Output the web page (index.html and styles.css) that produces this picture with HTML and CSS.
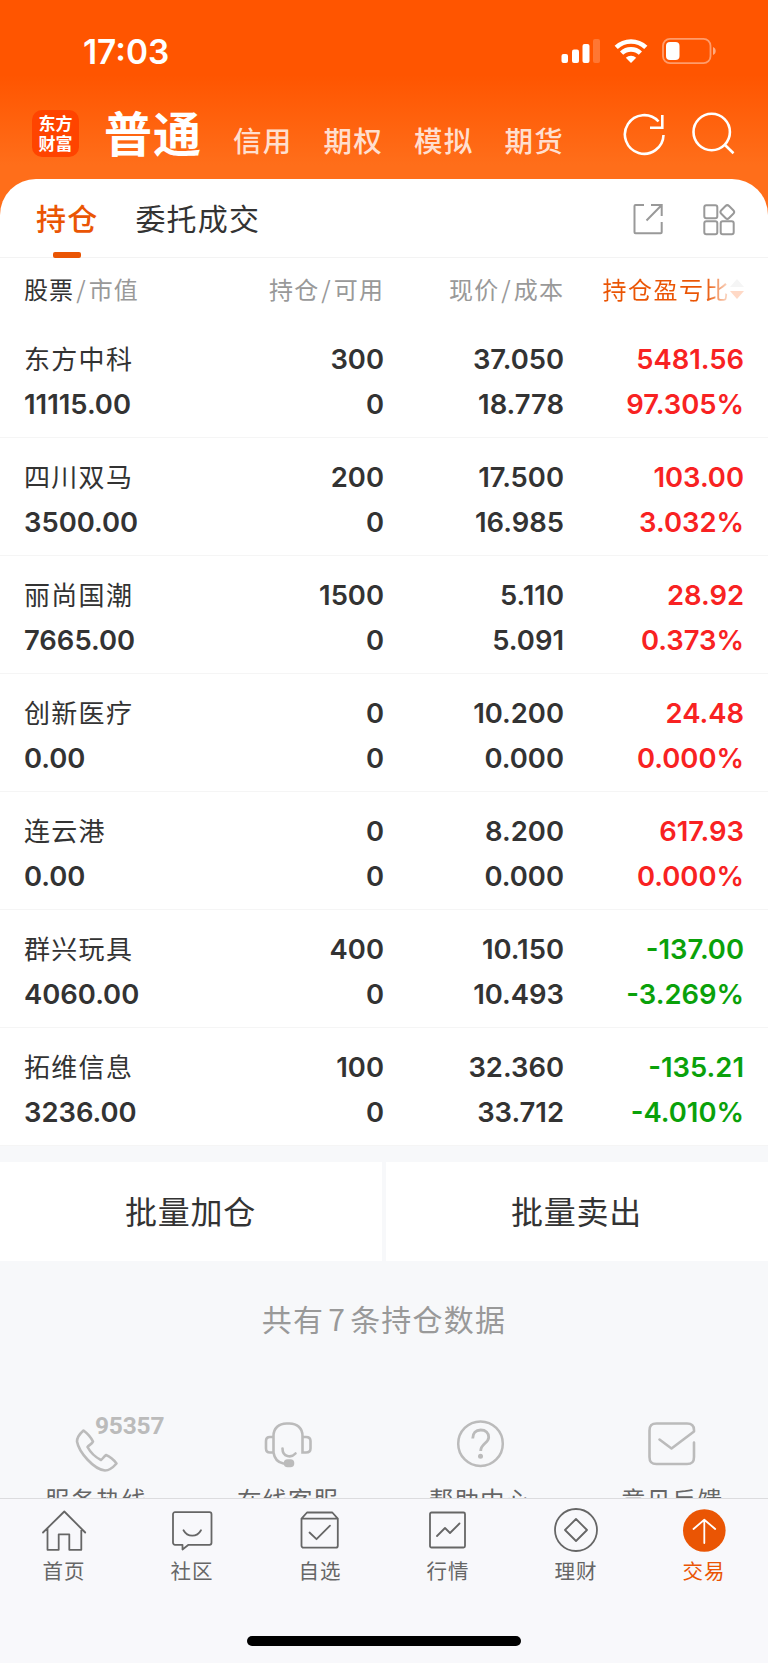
FILE: index.html
```html
<!DOCTYPE html>
<html lang="zh-CN">
<head>
  <meta charset="UTF-8">
  <meta name="viewport" content="width=device-width, initial-scale=1.0">
  <title>持仓</title>
  <link rel="stylesheet" href="styles.css">
</head>
<body>
  <div class="page">
    <header class="header">
      <div class="status">
        <span class="time">17:03</span>
        <svg class="status-icons" width="160" height="30" viewBox="0 0 160 30" fill="#fff">
          <!-- 信号 -->
          <rect x="1.5" y="18" width="6.5" height="9" rx="2"/>
          <rect x="12" y="13.500" width="7" height="13.500" rx="2"/>
          <rect x="22.500" y="8" width="7" height="19" rx="2"/>
          <rect x="33" y="3" width="7" height="24" rx="2" opacity=".2"/>
          <!-- wifi -->
          <g fill="none" stroke="#fff" stroke-width="4.600">
            <path d="M56.200 11.400a21.500 21.500 0 0 1 29.600 0"/>
            <path d="M61.600 17.200a13.500 13.500 0 0 1 18.800 0"/>
          </g>
          <path d="M71 27l-5.200-5.200a7.600 7.600 0 0 1 10.400 0z"/>
          <!-- 电池 -->
          <rect x="103" y="2.800" width="47.500" height="24.400" rx="7" fill="none" stroke="#fff" stroke-width="1.800" opacity=".42"/>
          <rect x="106" y="6" width="13.500" height="18" rx="4"/>
          <path d="M153 11c3.600 1.200 3.600 6.800 0 8z" opacity=".5"/>
        </svg>
      </div>
      <nav class="nav">
        <div class="logo">东方<br>财富</div>
        <span class="nav-on">普通</span>
        <span class="nav-item">信用</span>
        <span class="nav-item">期权</span>
        <span class="nav-item">模拟</span>
        <span class="nav-item">期货</span>
        <svg class="nav-icons" width="116" height="46" viewBox="0 0 116 46" fill="none" stroke="#fff" stroke-width="2.600">
          <path d="M43.500 24A19.300 19.300 0 1 1 38.500 10.500"/>
          <path d="M42.300 4v12.700H30" />
          <circle cx="91.700" cy="21" r="18.200"/>
          <path d="M104.500 33.500l9 8.700"/>
        </svg>
      </nav>
    </header>

    <main class="card">
      <div class="tabs">
        <span class="tab tab-on">持仓</span>
        <span class="tab">委托成交</span>
        <svg class="tab-icons" width="106" height="34" viewBox="0 0 106 34" fill="none" stroke="#999" stroke-width="2">
          <path d="M14 3H5.500a1 1 0 0 0-1 1v26.200a1 1 0 0 0 1 1h25.200a1 1 0 0 0 1-1V20"/>
          <path d="M21 3h10.700v11M31 3.700L16.500 18.500"/>
          <rect x="74.300" y="3.300" width="13" height="13" rx="2"/>
          <rect x="74.300" y="19.300" width="13" height="13" rx="2"/>
          <rect x="90.700" y="19.300" width="13" height="13" rx="2"/>
          <rect x="91.800" y="4.500" width="11" height="11" rx="2.500" transform="rotate(45 97.300 10)"/>
        </svg>
      </div>

      <div class="row row-head">
        <div><b>股票</b><i>/</i>市值</div>
        <div>持仓<i>/</i>可用</div>
        <div>现价<i>/</i>成本</div>
        <div class="sort">持仓盈亏比
          <svg width="14" height="20" viewBox="0 0 14 20"><path d="M0 8l7-8 7 8z" fill="#f5f5f5"/><path d="M0 12h14l-7 8z" fill="#ffd9c6"/></svg>
        </div>
      </div>

      <div class="row">
        <div><p class="name">东方中科</p><p>11115.00</p></div>
        <div><p>300</p><p>0</p></div>
        <div><p>37.050</p><p>18.778</p></div>
        <div class="up"><p>5481.56</p><p>97.305%</p></div>
      </div>
      <div class="row">
        <div><p class="name">四川双马</p><p>3500.00</p></div>
        <div><p>200</p><p>0</p></div>
        <div><p>17.500</p><p>16.985</p></div>
        <div class="up"><p>103.00</p><p>3.032%</p></div>
      </div>
      <div class="row">
        <div><p class="name">丽尚国潮</p><p>7665.00</p></div>
        <div><p>1500</p><p>0</p></div>
        <div><p>5.110</p><p>5.091</p></div>
        <div class="up"><p>28.92</p><p>0.373%</p></div>
      </div>
      <div class="row">
        <div><p class="name">创新医疗</p><p>0.00</p></div>
        <div><p>0</p><p>0</p></div>
        <div><p>10.200</p><p>0.000</p></div>
        <div class="up"><p>24.48</p><p>0.000%</p></div>
      </div>
      <div class="row">
        <div><p class="name">连云港</p><p>0.00</p></div>
        <div><p>0</p><p>0</p></div>
        <div><p>8.200</p><p>0.000</p></div>
        <div class="up"><p>617.93</p><p>0.000%</p></div>
      </div>
      <div class="row">
        <div><p class="name">群兴玩具</p><p>4060.00</p></div>
        <div><p>400</p><p>0</p></div>
        <div><p>10.150</p><p>10.493</p></div>
        <div class="down"><p>-137.00</p><p>-3.269%</p></div>
      </div>
      <div class="row">
        <div><p class="name">拓维信息</p><p>3236.00</p></div>
        <div><p>100</p><p>0</p></div>
        <div><p>32.360</p><p>33.712</p></div>
        <div class="down"><p>-135.21</p><p>-4.010%</p></div>
      </div>
    </main>

    <div class="batch">
      <div class="batch-btn">批量加仓</div>
      <div class="batch-btn">批量卖出</div>
    </div>
    <p class="total">共有<span>7</span>条持仓数据</p>

    <div class="service">
      <div class="service-item">
        <svg width="140" height="64" viewBox="0 0 140 64" fill="none" stroke="#bbb" stroke-width="2.600" stroke-linejoin="round">
          <path d="M57.500 20.500c-4 3.500-6.500 7.500-6.500 11 2 11 17 28 28 29 4 0 8-3 11.500-7-3-4-6.500-7-10.500-8.500-2 1.500-3 3.500-5 5-6-3-10.500-7.500-13.500-13 1.500-2 4.500-3 5.500-5.500-2-4-5.500-8-9.500-11z"/>
          <text class="hotline" x="69" y="24">95357</text>
        </svg>
        <span>服务热线</span>
      </div>
      <div class="service-item">
        <svg width="140" height="64" viewBox="0 0 140 64" fill="none" stroke="#bbb" stroke-width="2.600" stroke-linecap="round">
          <path d="M55.500 42.500V26c0-8 5.500-12.500 13-12.500h3c7.500 0 13 4.500 13 12.500v16.500h3.500c3 0 4.500-1.500 4.500-4V31c0-2.500-1.500-4-4.500-4h-3.500M55.500 27H52c-3 0-4 1.500-4 4v7.500c0 2.500 1 4 4 4h3.500c1 6.500 4 10 10 11"/>
          <path d="M64.500 38.500c0 9 9 9.500 13 5"/>
          <rect x="67" y="50.500" width="8" height="5.500" rx="2.700" fill="#bbb"/>
        </svg>
        <span>在线客服</span>
      </div>
      <div class="service-item">
        <svg width="140" height="64" viewBox="0 0 140 64" fill="none" stroke="#bbb" stroke-width="2.500">
          <circle cx="70.500" cy="33.700" r="22.300"/>
          <path d="M62.700 28.500c0-5.500 3-8.500 8-8.500s8 3 8 7.200c0 6-8 6.300-8 13.800" stroke-width="2.800"/>
          <circle cx="70.500" cy="46.200" r="2.500" fill="#bbb" stroke="none"/>
        </svg>
        <span>帮助中心</span>
      </div>
      <div class="service-item">
        <svg width="140" height="64" viewBox="0 0 140 64" fill="none" stroke="#bbb" stroke-width="2.600" stroke-linecap="round" stroke-linejoin="round">
          <path d="M92 32.500V47c0 5-2 7-7 7H54.500c-5 0-7-2-7-7V20.500c0-5 2-7 7-7H85c4.500 0 7 2.500 7 6.500v1.500L69.500 38.500 57.500 29.500"/>
        </svg>
        <span>意见反馈</span>
      </div>
    </div>

    <footer class="tabbar">
      <div class="tabbar-item">
        <svg width="50" height="50" viewBox="0 0 50 50">
          <path d="M4 26.500L25.300 5.500l20.900 21M8.500 22.500v21.300h11.200V28.300h10.600v15.500h12V22.500"/>
        </svg>
        <span>首页</span>
      </div>
      <div class="tabbar-item">
        <svg width="50" height="50" viewBox="0 0 50 50">
          <path d="M8 6.200h34.500a2 2 0 0 1 2 2v28.600a2 2 0 0 1-2 2H21.500l-6 4.700v-4.700H8a2 2 0 0 1-2-2V8.200a2 2 0 0 1 2-2z"/>
          <path d="M16.500 24.200c4 7.200 13.500 7.200 17.500 0"/>
        </svg>
        <span>社区</span>
      </div>
      <div class="tabbar-item">
        <svg width="50" height="50" viewBox="0 0 50 50">
          <path d="M6.500 12.700h36.300v27a2 2 0 0 1-2 2H8.500a2 2 0 0 1-2-2zM6.500 12.700l5.500-6.200h25.300l5.500 6.200"/>
          <path d="M14.500 26.500l7 6.700 13.500-13.500"/>
        </svg>
        <span>自选</span>
      </div>
      <div class="tabbar-item">
        <svg width="50" height="50" viewBox="0 0 50 50">
          <rect x="7" y="6.500" width="35" height="35" rx="1.500"/>
          <path d="M14 30l8-8 5 5 9.500-9.500"/>
        </svg>
        <span>行情</span>
      </div>
      <div class="tabbar-item">
        <svg width="50" height="50" viewBox="0 0 50 50">
          <circle cx="25" cy="24" r="21"/>
          <path d="M25 13l11 11-11 11-11-11z"/>
        </svg>
        <span>理财</span>
      </div>
      <div class="tabbar-item tabbar-on">
        <svg width="50" height="50" viewBox="0 0 50 50">
          <circle cx="25.300" cy="24.500" r="21.300" fill="#ea5504" stroke="none"/>
          <path d="M25.300 37V14M14.500 23l10.800-9.300L36.200 23" stroke="#fff"/>
        </svg>
        <span>交易</span>
      </div>
      <div class="home-bar"></div>
    </footer>
  </div>
</body>
</html>
```
FILE: styles.css
```css
* {
  box-sizing: border-box;
}
body, p {
  margin: 0;
}
body {
  font-family: Inter, "Noto Sans CJK SC", sans-serif;
  color: #333;
  background: #f7f8fa;
}
svg {
  display: block;
  flex: none;
}
.page {
  display: flex;
  flex-direction: column;
  width: 768px;
  height: 1663px;
  overflow: hidden;
  background: #f7f8fa;
}

/* 顶部 */
.header {
  flex: none;
  height: 219px;
  color: #fff;
  background: linear-gradient(#ff5500 75px, #ff6e1a 165px);
}
.status {
  display: flex;
  justify-content: space-between;
  height: 100px;
  padding: 36px 48px 0 83px;
}
.time {
  font-size: 33.4px;
  font-weight: 600;
  line-height: 32px;
}
.nav {
  display: flex;
  padding: 10px 32px 0 32px;
  font-family: "Noto Sans CJK SC", sans-serif;
}
.logo {
  width: 47px;
  height: 47px;
  padding-top: 3px;
  border-radius: 10px;
  background: #ff4400;
  font-size: 17px;
  font-weight: 700;
  line-height: 20px;
  text-align: center;
}
.nav-on {
  width: 129px;
  margin-left: 25px;
  font-size: 48px;
  font-weight: 700;
  line-height: 42px;
  letter-spacing: 1px;
}
.nav-item {
  width: 90.5px;
  height: 48px;
  font-size: 28.5px;
  font-weight: 500;
  line-height: 60px;
  letter-spacing: 1.3px;
  color: #ffdfcf;
}
.nav-icons {
  margin: 1px 0 0 auto;
}

/* 持仓列表 */
.card {
  flex: none;
  margin-top: -40px;
  border-radius: 36px 36px 0 0;
  background: #fff;
}
.tabs {
  display: flex;
  height: 79px;
  padding: 0 32px 0 36px;
  border-bottom: 1px solid #f3f3f3;
}
.tab {
  position: relative;
  margin-right: 37px;
  font-size: 30px;
  line-height: 80px;
  letter-spacing: 1.2px;
}
.tab-on {
  font-weight: 500;
  color: #ea5504;
}
.tab-on::after {
  content: "";
  position: absolute;
  left: 17px;
  top: 73px;
  width: 28px;
  height: 6px;
  border-radius: 2px;
  background: #ea5504;
}
.tab-icons {
  margin: 22.5px 0 0 auto;
}
.row {
  display: grid;
  grid-template-columns: 180px 180px 180px 180px;
  height: 118px;
  padding: 17px 0 0 24px;
  border-bottom: 1px solid #f5f5f5;
  font-size: 27.4px;
  font-weight: 600;
  line-height: 44.5px;
}
.row > div {
  text-align: right;
}
.row > div:first-child {
  text-align: left;
}
.row .name {
  padding-top: 1px;
  font-size: 26px;
  font-weight: 400;
  line-height: 43.5px;
  letter-spacing: 1.3px;
}
.row-head {
  height: 62px;
  padding-top: 9px;
  border: 0;
  font-family: "Noto Sans CJK SC", sans-serif;
  font-size: 24px;
  font-weight: 400;
  letter-spacing: 1.1px;
  color: #999;
}
.row-head b {
  font-weight: 400;
  color: #333;
}
.row-head i {
  padding: 0 2px;
  font-style: normal;
}
.row-head .sort {
  display: flex;
  justify-content: flex-end;
  align-items: center;
  height: 44px;
  letter-spacing: 1.5px;
  color: transparent;
  background: linear-gradient(90deg, #ea5504 142px, #fff 170px);
  -webkit-background-clip: text;
  background-clip: text;
}
.up {
  color: #f82222;
}
.down {
  color: #0aa10a;
}

/* 批量操作 */
.batch {
  flex: none;
  display: grid;
  grid-template-columns: 1fr 1fr;
  gap: 4px;
  margin-top: 16px;
}
.batch-btn {
  height: 99px;
  padding-right: 1px;
  background: #fff;
  font-size: 32px;
  line-height: 101px;
  letter-spacing: .8px;
  text-align: center;
}
.total {
  flex: none;
  height: 149px;
  font-family: "Noto Sans CJK SC", sans-serif;
  font-size: 30px;
  line-height: 115px;
  letter-spacing: 1.2px;
  text-align: center;
  color: #999;
}
.total span {
  padding: 0 4px;
}

/* 服务入口，下半部分被底栏挡住 */
.service {
  flex: none;
  display: grid;
  grid-template-columns: repeat(4, 1fr);
  height: 88px;
  overflow: hidden;
}
.service-item {
  display: flex;
  flex-direction: column;
  align-items: center;
  font-size: 24.5px;
  line-height: 36px;
  letter-spacing: 1px;
  color: #666;
}
.service-item span {
  margin-top: 9px;
}
.hotline {
  font-family: Roboto, sans-serif;
  font-size: 24.5px;
  font-weight: 700;
  letter-spacing: -.2px;
  fill: #bbb;
  stroke: none;
}

/* 底栏 */
.tabbar {
  flex: none;
  display: grid;
  grid-template-columns: repeat(6, 1fr);
  align-content: start;
  height: 165px;
  padding-top: 7px;
  border-top: 1px solid #dcdcde;
  background: #f8f8fb;
}
.tabbar-item {
  display: flex;
  flex-direction: column;
  align-items: center;
  font-size: 20.5px;
  line-height: 32px;
  letter-spacing: 1px;
  color: #666;
}
.tabbar-item svg {
  fill: none;
  stroke: #666;
  stroke-width: 1.8;
  stroke-linecap: round;
  stroke-linejoin: round;
}
.tabbar-on {
  color: #ea5504;
}
.home-bar {
  grid-column: 1 / -1;
  justify-self: center;
  width: 274px;
  height: 10px;
  margin-top: 48px;
  border-radius: 5px;
  background: #000;
}
```
